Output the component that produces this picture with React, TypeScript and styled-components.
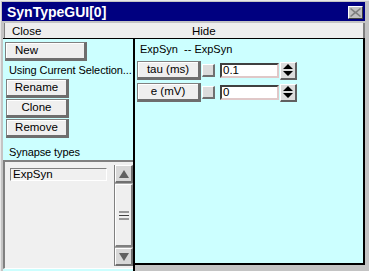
import styled, { createGlobalStyle } from "styled-components"

const GlobalStyle = createGlobalStyle`
  html, body { margin: 0; padding: 0; background: #c4c4c4; }
  body { font-family: "Liberation Sans", Arial, sans-serif; }
`

const Window = styled.div`
  width: 369px;
  height: 271px;
  box-sizing: border-box;
  background: #c4c4c4;
  border-top: 1px solid #e8e8e8;
  border-left: 1px solid #e8e8e8;
  padding: 1px 4px 0 1px;
  display: flex;
  flex-direction: column;
  overflow: hidden;
`

const TitleBar = styled.div`
  height: 19px;
  background: #000080;
  display: flex;
  align-items: center;
  justify-content: space-between;
  padding: 0 2px 0 5px;
`

const Title = styled.span`
  color: #fff;
  font-weight: bold;
  font-size: 14px;
`

const CloseBox = styled.div`
  width: 15px;
  height: 13px;
  box-sizing: border-box;
  background: #c0c0c0;
  border-top: 1px solid #fff;
  border-left: 1px solid #fff;
  border-right: 1px solid #404040;
  border-bottom: 1px solid #404040;
  display: flex;
  align-items: center;
  justify-content: center;
  margin-top: 2px;
`

const MenuBar = styled.div`
  margin: 2px 0 0 2px;
  height: 15px;
  background: #eeeeee;
  border-left: 1px solid #808080;
  border-right: 2px solid #808080;
  display: grid;
  grid-template-columns: 180px auto;
  align-items: center;
  padding-left: 7px;
  font-size: 11.5px;
  color: #000;
`

const Body = styled.div`
  display: flex;
  margin: 0 0 0 1px;
  border-top: 1px solid #000;
  flex: 1;
`

const LeftColumn = styled.div`
  width: 130px;
  border-right: 2px solid #000;
  display: flex;
  flex-direction: column;
  background: #ccffff;
`

const LeftTop = styled.div`
  display: flex;
  flex-direction: column;
  align-items: flex-start;
  padding: 3px 0 0 2px;
`

const Button = styled.div<{ $w: number; $left?: boolean }>`
  width: ${(p) => p.$w}px;
  height: 19px;
  box-sizing: border-box;
  background: #efefef;
  border-top: 1px solid #808080;
  border-left: 1px solid #808080;
  border-right: 3px solid #6e6e6e;
  border-bottom: 3px solid #6e6e6e;
  box-shadow: inset 1px 1px 0 #fff;
  font-size: 11.5px;
  line-height: 15px;
  color: #000;
  display: flex;
  justify-content: ${(p) => (p.$left ? "flex-start" : "center")};
  padding-left: ${(p) => (p.$left ? "9px" : "0")};
`

const Label = styled.div<{ $top?: number }>`
  font-size: 11px;
  letter-spacing: -0.1px;
  color: #000;
  margin: ${(p) => p.$top ?? 0}px 0 0 4px;
  height: 13px;
  line-height: 13px;
  white-space: pre;
`

const ButtonStack = styled.div`
  display: flex;
  flex-direction: column;
  gap: 1px;
  margin: 2px 0 0 1px;
`

const ListFrame = styled.div`
  flex: 1;
  margin-top: 1px;
  display: flex;
  background: #f0f0f0;
  border-top: 2px solid #808080;
  border-left: 2px solid #808080;
  border-bottom: 1px solid #fff;
  padding: 3px 0 2px 5px;
  margin-bottom: 2px;
`

const ListBody = styled.div`
  flex: 1;
  padding-top: 3px;
`

const ListItem = styled.div`
  width: 97px;
  height: 13px;
  box-sizing: border-box;
  border-top: 1px solid #808080;
  border-left: 1px solid #808080;
  border-bottom: 1px solid #fff;
  border-right: 1px solid #fff;
  font-size: 11.5px;
  line-height: 11px;
  padding-left: 2px;
  color: #000;
`

const ScrollBar = styled.div`
  width: 18px;
  display: flex;
  flex-direction: column;
  background: #a8a8a8;
  border-left: 1px solid #808080;
`

const ScrollButton = styled.div`
  height: 18px;
  box-sizing: border-box;
  background: #d8d8d8;
  border-top: 1px solid #fff;
  border-left: 1px solid #fff;
  border-right: 2px solid #707070;
  border-bottom: 2px solid #707070;
  display: flex;
  align-items: center;
  justify-content: center;
`

const Thumb = styled.div`
  flex: 1;
  margin: 1px 0;
  box-sizing: border-box;
  background: #efefef;
  border-top: 1px solid #fff;
  border-left: 1px solid #fff;
  border-right: 2px solid #808080;
  border-bottom: 2px solid #808080;
  display: flex;
  align-items: center;
  justify-content: center;
`

const RightPanel = styled.div`
  flex: 1;
  background: #ccffff;
  border-right: 2px solid #000;
  border-bottom: 2px solid #000;
  margin-bottom: 6px;
  padding: 4px 0 0 2px;
  display: flex;
  flex-direction: column;
`

const Heading = styled.div`
  font-size: 11px;
  color: #000;
  margin-left: 3px;
  white-space: pre;
  height: 15px;
`

const Row = styled.div`
  display: flex;
  align-items: center;
  height: 19px;
  margin-top: 3px;
`

const Indicator = styled.div`
  width: 13px;
  height: 13px;
  box-sizing: border-box;
  margin-left: 1px;
  background: #dcdcdc;
  border-top: 1px solid #fff;
  border-left: 1px solid #fff;
  border-right: 2px solid #707070;
  border-bottom: 2px solid #707070;
`

const Field = styled.div`
  width: 59px;
  height: 15px;
  box-sizing: border-box;
  margin-left: 5px;
  background: #fff;
  border-top: 2px solid #404040;
  border-left: 2px solid #404040;
  border-right: 2px solid #e0c8c8;
  border-bottom: 2px solid #e0c8c8;
  font-size: 11.5px;
  line-height: 11px;
  padding-left: 1px;
  color: #000;
`

const Spinner = styled.div`
  width: 17px;
  height: 18px;
  box-sizing: border-box;
  margin-left: 1px;
  background: #dcdcdc;
  border-top: 1px solid #fff;
  border-left: 1px solid #fff;
  border-right: 2px solid #606060;
  border-bottom: 2px solid #606060;
  display: flex;
  align-items: center;
  justify-content: center;
`

const SpinIcon = () => (
  <svg width="10" height="12" viewBox="0 0 10 12">
    <path d="M5 0 L10 5 L0 5 Z M0 7 L10 7 L5 12 Z" fill="#000" />
  </svg>
)

const ParamRow = ({ name, value }: { name: string; value: string }) => (
  <Row>
    <Button $w={64}>{name}</Button>
    <Indicator />
    <Field>{value}</Field>
    <Spinner>
      <SpinIcon />
    </Spinner>
  </Row>
)

export default function App() {
  return (
    <>
      <GlobalStyle />
      <Window>
        <TitleBar>
          <Title>SynTypeGUI[0]</Title>
          <CloseBox>
            <svg width="11" height="9" viewBox="0 0 11 9">
              <path d="M1 0 L5.5 3.5 L10 0 L11 1 L7 4.5 L11 8 L10 9 L5.5 5.5 L1 9 L0 8 L4 4.5 L0 1 Z" fill="#808080" />
            </svg>
          </CloseBox>
        </TitleBar>
        <MenuBar>
          <span>Close</span>
          <span>Hide</span>
        </MenuBar>
        <Body>
          <LeftColumn>
            <LeftTop>
              <Button $w={82} $left>New</Button>
              <Label $top={3}>Using Current Selection...</Label>
              <ButtonStack>
                <Button $w={63}>Rename</Button>
                <Button $w={63}>Clone</Button>
                <Button $w={63}>Remove</Button>
              </ButtonStack>
              <Label $top={8}>Synapse types</Label>
            </LeftTop>
            <ListFrame>
              <ListBody>
                <ListItem>ExpSyn</ListItem>
              </ListBody>
              <ScrollBar>
                <ScrollButton>
                  <svg width="10" height="8" viewBox="0 0 10 8">
                    <path d="M5 0 L10 8 L0 8 Z" fill="#606060" />
                  </svg>
                </ScrollButton>
                <Thumb>
                  <svg width="10" height="9" viewBox="0 0 10 9">
                    <path d="M0 1 H10 M0 4.5 H10 M0 8 H10" stroke="#404040" strokeWidth="1" />
                  </svg>
                </Thumb>
                <ScrollButton>
                  <svg width="10" height="8" viewBox="0 0 10 8">
                    <path d="M0 0 L10 0 L5 8 Z" fill="#606060" />
                  </svg>
                </ScrollButton>
              </ScrollBar>
            </ListFrame>
          </LeftColumn>
          <RightPanel>
            <Heading>{"ExpSyn  -- ExpSyn"}</Heading>
            <ParamRow name="tau (ms)" value="0.1" />
            <ParamRow name="e (mV)" value="0" />
          </RightPanel>
        </Body>
      </Window>
    </>
  )
}
